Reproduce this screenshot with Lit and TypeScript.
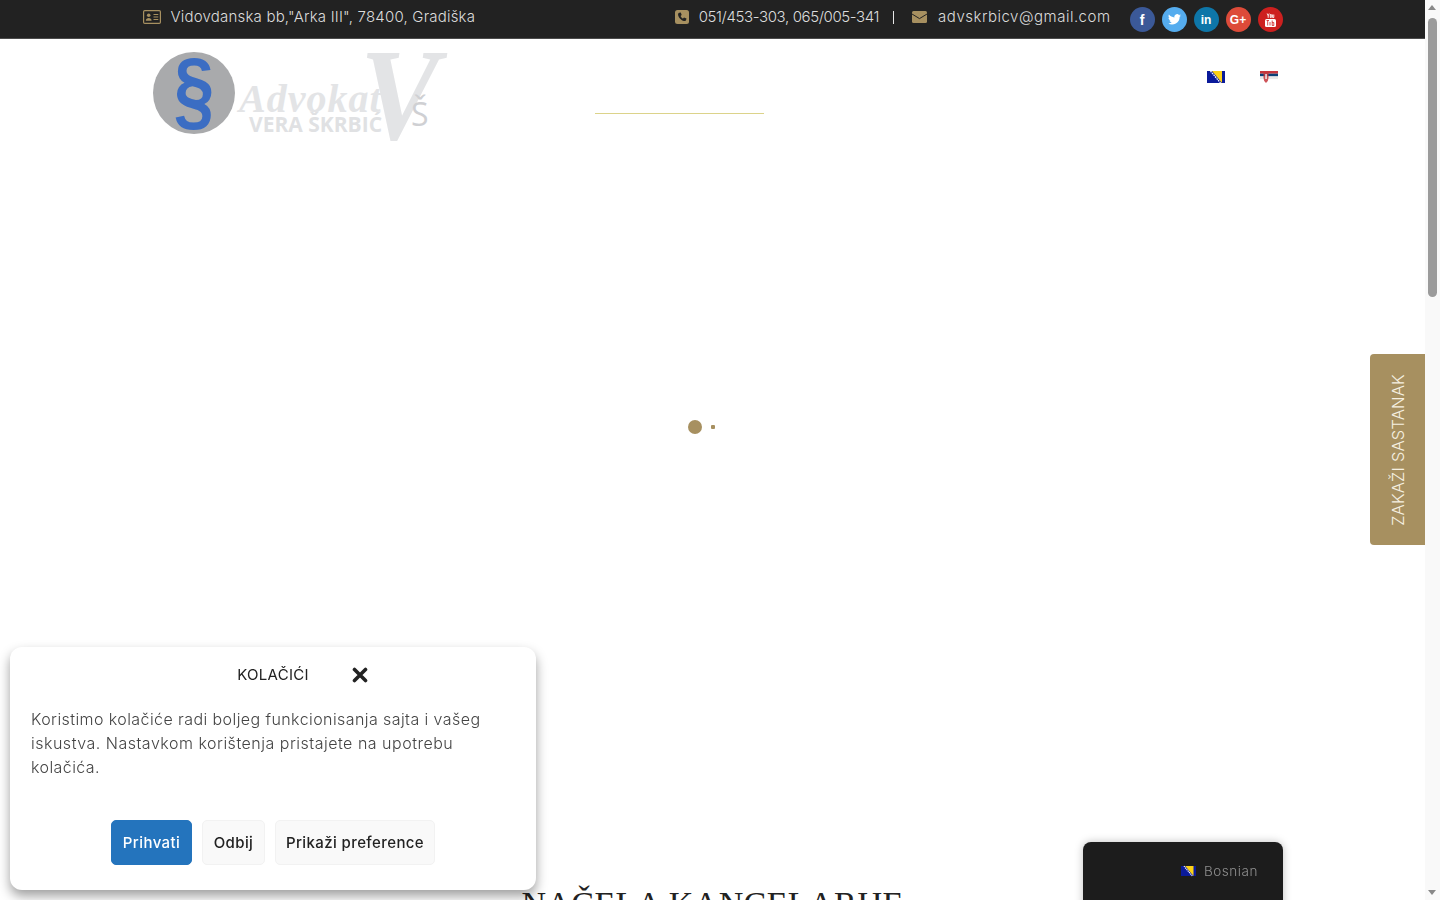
import { LitElement, html, css, svg } from "lit";
import { customElement } from "lit/decorators.js";

const flagBa = (w: number, h: number) => svg`<svg width=${w} height=${h} viewBox="0 0 18 12" aria-hidden="true">
  <rect width="18" height="12" fill="#0a1a9a"/>
  <polygon points="5,0 15,0 15,12" fill="#fcd116"/>
  <path d="M3.5 0 L13.5 12" stroke="#fff" stroke-width="1.3" stroke-dasharray="1.6 .8"/>
</svg>`;

const flagRs = svg`<svg width="18" height="14" viewBox="0 0 18 14" aria-hidden="true">
  <rect y="0" width="18" height="2.7" fill="#c6363c"/>
  <rect y="2.7" width="18" height="2.7" fill="#0c4076"/>
  <rect y="5.4" width="18" height="2.7" fill="#e8e8e8"/>
  <path d="M3.5 1 h5 v6 q0 3 -2.5 5 q-2.5 -2 -2.5 -5z" fill="#c6363c" opacity=".85"/>
  <rect x="5.3" y="3" width="1.5" height="5" fill="#eee"/>
</svg>`;

@customElement("app-root")
export class AppRoot extends LitElement {
  static styles = css`
    :host { display: block; position: relative; width: 1440px; height: 900px; overflow: hidden; background: #fff; }
  `;
  render() { return html`<site-page></site-page>`; }
}

@customElement("site-page")
export class SitePage extends LitElement {
  static styles = css`
    :host { display: block; width: 1425px; height: 900px; font-family: "Inter", "Open Sans", "Liberation Sans", sans-serif; }
    * { box-sizing: border-box; }
    .top { background: #222; height: 39px; border-bottom: 1px solid #4c4c4c; }
    .wrap { width: 1140px; margin: 0 auto; }
    .top .wrap { display: flex; align-items: flex-start; height: 38px; }
    .info { display: flex; align-items: center; height: 33px; color: #dcdcdc; font-size: 15px; font-weight: 300; white-space: nowrap; }
    .info svg { display: block; flex: none; }
    .addr { gap: 10px; letter-spacing: .2px; }
    .right { margin-left: auto; display: flex; align-items: flex-start; }
    .phone { gap: 10px; letter-spacing: -.38px; }
    .sep { width: 1px; height: 13px; background: #e6e6e6; margin: 1px 18px 0 4px; }
    .mail { gap: 11px; letter-spacing: .5px; }
    .social { display: flex; gap: 7px; margin: 7px 0 0 19px; }
    .soc { width: 25px; height: 25px; border-radius: 50%; color: #fff; display: flex; align-items: center; justify-content: center; font: 700 12px "Liberation Sans", sans-serif; }
    .soc.fb { font-size: 14px; }
    .fb { background: #3b5998; } .tw { background: #55acee; } .li { background: #0e76a8; } .gp { background: #dd4b39; } .yt { background: #cd201f; }
    .head { display: flex; align-items: flex-start; height: 100px; padding: 6px 5px 0 7px; }
    .logo { display: block; flex: none; overflow: visible; }
    .nav { width: 169px; height: 69px; margin-left: 145px; border-bottom: 1px solid #dcd38a; flex: none; }
    .flags { margin-left: auto; display: flex; gap: 35px; align-items: flex-start; padding-top: 26px; }
    .flags svg { display: block; }
    .hero { height: 576px; display: flex; align-items: center; justify-content: center; }
    .loader { width: 50px; display: flex; align-items: center; gap: 9px; }
    .big { width: 14px; height: 14px; border-radius: 50%; background: #a79060; }
    .small { width: 4px; height: 4px; background: #a79060; border-radius: 1px; }
    h2 { margin: 0; padding-top: 169px; text-align: center; font: 400 34px/1.2 "Liberation Serif", serif; color: #222; letter-spacing: .4px; white-space: nowrap; }
    .tab { position: fixed; left: 1370px; top: 354px; width: 55px; height: 191px; background: #a79060; border-radius: 4px 0 0 4px; display: flex; align-items: center; justify-content: center; color: #f6f0e2; }
    .tab span { writing-mode: vertical-rl; transform: rotate(180deg); font-size: 16.5px; font-weight: 300; white-space: nowrap; letter-spacing: .2px; }
    .cookie { position: fixed; left: 10px; top: 647px; width: 526px; height: 243px; background: #fff; border-radius: 12px; box-shadow: 0 6px 12px rgba(0,0,0,.38); padding: 17px 21px 0; display: flex; flex-direction: column; }
    .ctitle { display: flex; align-items: center; justify-content: center; height: 20px; position: relative; color: #222; font-size: 15px; font-weight: 400; letter-spacing: .3px; }
    .close { position: absolute; left: 321px; top: 3px; display: block; }
    .cbody { margin: 0; padding-top: 23px; height: 136px; font-size: 16px; line-height: 24px; font-weight: 300; color: #444; letter-spacing: .42px; }
    .l2 { letter-spacing: .5px; }
    .btns { display: flex; justify-content: center; gap: 10px; }
    .btn { height: 45px; display: flex; align-items: center; justify-content: center; border-radius: 5px; border: 1px solid #f2f2f2; background: #f9f9f9; color: #222; font-size: 15px; font-weight: 500; letter-spacing: .4px; }
    .b1 { width: 81px; background: #2474bd; border-color: #2474bd; color: #fff; }
    .b2 { width: 63px; } .b3 { width: 160px; }
    .lang { position: fixed; left: 1083px; top: 842px; width: 200px; height: 70px; background: #1c1c1c; border-radius: 8px 8px 0 0; box-shadow: 0 0 8px rgba(0,0,0,.25); display: flex; align-items: flex-start; justify-content: flex-end; gap: 8px; padding: 21px 25px 0 0; color: #8f8f8f; font-size: 13.5px; font-weight: 300; letter-spacing: .55px; }
    .lang svg { display: block; margin-top: 2px; }
    .sb { position: fixed; left: 1425px; top: 0; width: 15px; height: 900px; background: #f9f9f9; }
    .arrow { position: absolute; left: 3px; width: 0; height: 0; border-left: 4.5px solid transparent; border-right: 4.5px solid transparent; }
    .up { top: 5px; border-bottom: 5px solid #888; }
    .down { bottom: 5px; border-top: 5px solid #888; }
    .thumb { position: absolute; left: 3px; top: 18px; width: 9px; height: 279px; background: #9b9b9b; border-radius: 5px; }
  `;

  render() {
    return html`
      <div class="top"><div class="wrap">
        <div class="info addr">
          <svg width="18" height="14" viewBox="0 0 18 14"><rect x=".6" y=".6" width="16.8" height="12.8" rx="1.2" fill="none" stroke="#a79060" stroke-width="1.2"/><circle cx="5.7" cy="5.3" r="1.8" fill="#a79060"/><path d="M2.8 10.8c0-3.6 5.8-3.6 5.8 0z" fill="#a79060"/><path d="M10.5 4.5h4.8M10.5 7h4.8M10.5 9.5h4.8" stroke="#a79060" stroke-width="1.1"/></svg>
          <span>Vidovdanska bb,"Arka III", 78400, Gradiška</span>
        </div>
        <div class="right">
          <div class="info phone">
            <svg width="14" height="14" viewBox="0 0 14 14"><rect width="14" height="14" rx="2.5" fill="#a79060"/><path d="M4.3 2.8 L5.8 2.4 L6.7 5 L5.6 5.9 C6 7 6.9 8 8 8.5 L9 7.4 L11.5 8.4 L11.1 9.9 C10.9 10.8 10 11.2 9 11 C6.2 10.4 3.6 7.6 3.1 4.9 C3 3.9 3.4 3 4.3 2.8Z" fill="#222"/></svg>
            <span>051/453-303, 065/005-341</span>
            <div class="sep"></div>
          </div>
          <div class="info mail">
            <svg width="15" height="12" viewBox="0 0 15 12"><rect width="15" height="12" rx="1.5" fill="#a79060"/><path d="M0 3 L7.5 7.6 L15 3" fill="none" stroke="#222" stroke-width="1"/></svg>
            <span>advskrbicv@gmail.com</span>
          </div>
          <div class="social">
            <div class="soc fb">f</div>
            <div class="soc tw"><svg width="13" height="11" viewBox="0 0 24 20"><path fill="#fff" d="M24 2.4c-.9.4-1.8.7-2.8.8 1-.6 1.800-1.600 2.200-2.700-1 .6-2 1-3.100 1.200A4.900 4.900 0 0 0 11.900 6.200C7.800 6 4.200 4 1.700.9c-1.300 2.200-.6 5.100 1.500 6.500-.8 0-1.500-.2-2.200-.6 0 2.300 1.600 4.400 3.900 4.900-.7.200-1.500.2-2.200.1.600 2 2.400 3.400 4.600 3.400A9.900 9.900 0 0 1 0 17.100 14 14 0 0 0 21.500 4.700c1-.7 1.800-1.400 2.500-2.300z"/></svg></div>
            <div class="soc li">in</div>
            <div class="soc gp">G+</div>
            <div class="soc yt"><svg width="11" height="14" viewBox="0 0 11 14"><path d="M2.200 0.500l1 2.300 1-2.300M3.200 2.800v2M5.300 1.500h1v3h-1zM7.600 1.500v3h1.200v-3" fill="none" stroke="#fff" stroke-width=".9"/><rect x="0" y="6" width="11" height="8" rx="1.500" fill="#fff"/><path d="M1.500 7.500h2.500M2.700 7.500v5M5 9v3.500M7.200 7.500v5h1.600v-3h-1.600" fill="none" stroke="#cd201f" stroke-width=".8"/></svg></div>
          </div>
        </div>
      </div></div>

      <div class="wrap head">
        <svg class="logo" width="300" height="100" viewBox="0 0 300 100" role="img" aria-label="Advokat Vera Škrbić">
          <text transform="translate(249.500 94) scale(.9 1)" text-anchor="middle" font-family="Liberation Serif" font-style="italic" font-size="132" font-weight="700" fill="#e3e4e6">V</text>
          <circle cx="44" cy="48" r="41" fill="#a9aaac"/>
          <text transform="translate(44 75) scale(.96 1.16)" text-anchor="middle" font-family="Liberation Sans" font-weight="700" font-size="76" fill="#3b6dc3">§</text>
          <text x="89" y="67" font-family="Liberation Serif" font-style="italic" font-weight="700" font-size="40" letter-spacing="1" fill="#e3e4e6">Advokat</text>
          <text x="99" y="87" font-family="Open Sans" font-weight="700" font-size="21" fill="#e0e1e3">VERA ŠKRBIĆ</text>
          <text x="261" y="81" font-family="Open Sans" font-size="32" font-weight="400" fill="#cfd0d3">Š</text>
        </svg>
        <div class="nav"></div>
        <div class="flags">${flagBa(18, 12)}${flagRs}</div>
      </div>

      <div class="hero"><div class="loader"><div class="big"></div><div class="small"></div></div></div>
      <h2>NAČELA KANCELARIJE</h2>

      <div class="tab"><span>ZAKAŽI SASTANAK</span></div>

      <div class="cookie">
        <div class="ctitle">KOLAČIĆI
          <svg class="close" width="16" height="16" viewBox="0 0 16 16"><path d="M2.500 2.500 L13.500 13.500 M13.500 2.500 L2.500 13.500" stroke="#222" stroke-width="3.600" stroke-linecap="round"/></svg>
        </div>
        <p class="cbody">Koristimo kolačiće radi boljeg funkcionisanja sajta i vašeg<br><span class="l2">iskustva. Nastavkom korištenja pristajete na upotrebu</span><br>kolačića.</p>
        <div class="btns">
          <div class="btn b1">Prihvati</div>
          <div class="btn b2">Odbij</div>
          <div class="btn b3">Prikaži preference</div>
        </div>
      </div>

      <div class="lang">${flagBa(15, 12)}<span>Bosnian</span></div>

      <div class="sb"><div class="arrow up"></div><div class="thumb"></div><div class="arrow down"></div></div>
    `;
  }
}
